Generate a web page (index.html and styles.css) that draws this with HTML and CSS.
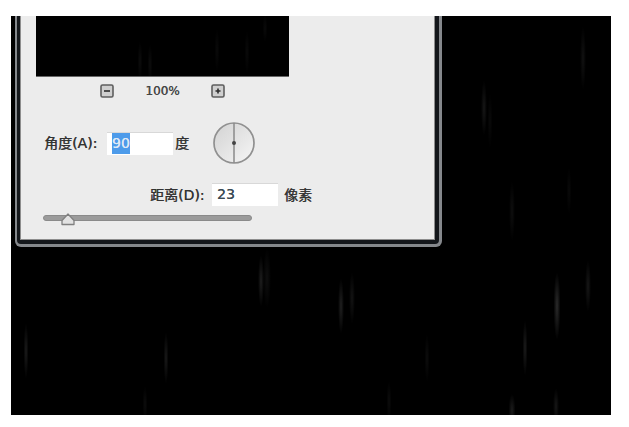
FILE: index.html
```html
<!DOCTYPE html>
<html lang="zh">
<head>
<meta charset="utf-8">
<title>动感模糊</title>
<link rel="stylesheet" href="styles.css">
</head>
<body>
<main class="canvas">
  <section class="dialog">
    <div class="dialog-dark">
      <div class="panel">
        <div class="preview"></div>
        <div class="zoom-row">
          <button class="zoom-btn" aria-label="缩小">
            <svg viewBox="0 0 14 14" width="14" height="14"><rect x="1" y="1" width="12" height="12" rx="1.5" fill="#cfcfcf" stroke="#5e5e5e" stroke-width="1.6"/><path d="M4 7h6" stroke="#2c2c2c" stroke-width="1.6"/></svg>
          </button>
          <span class="zoom-value">100%</span>
          <button class="zoom-btn" aria-label="放大">
            <svg viewBox="0 0 14 14" width="14" height="14"><rect x="1" y="1" width="12" height="12" rx="1.5" fill="#cfcfcf" stroke="#5e5e5e" stroke-width="1.6"/><path d="M4.500 7h5M7 4.500v5" stroke="#2c2c2c" stroke-width="1.6"/></svg>
          </button>
        </div>
        <div class="angle-row">
          <label class="label label-angle">角度(A):</label>
          <div class="field"><span class="selected">90</span></div>
          <span class="label unit-angle">度</span>
          <svg class="dial" viewBox="0 0 44 44" width="44" height="44">
            <defs><linearGradient id="dialFill" x1="0" y1="0" x2="1" y2="1"><stop offset="0" stop-color="#d2d2d2"/><stop offset="1" stop-color="#f6f6f6"/></linearGradient></defs>
            <circle cx="22" cy="22" r="20" fill="url(#dialFill)" stroke="#909090" stroke-width="1.700"/>
            <path d="M22 2v40" stroke="#8a8a8a" stroke-width="1.500"/>
            <circle cx="22" cy="22" r="2" fill="#444"/>
          </svg>
        </div>
        <div class="distance-row">
          <label class="label label-distance">距离(D):</label>
          <div class="field"><span class="plain">23</span></div>
          <span class="label unit-distance">像素</span>
        </div>
        <div class="slider">
          <svg class="thumb" viewBox="0 0 16 13" width="16" height="13"><path d="M8 1l6 6.500v4H2v-4z" fill="#e2e2e2" stroke="#808080" stroke-width="1.300" stroke-linejoin="round"/></svg>
        </div>
      </div>
    </div>
  </section>
</main>
</body>
</html>
```

FILE: styles.css
```css
* {
  box-sizing: border-box;
}

html,
body {
  margin: 0;
  padding: 0;
  background: #fff;
}

body {
  width: 629px;
  height: 427px;
  overflow: hidden;
  padding: 16px 0 0 11px;
}

.canvas {
  width: 600px;
  height: 399px;
  padding-left: 4px;
  overflow: hidden;
  background-color: #000;
  background-repeat: no-repeat;
  background-image:
    radial-gradient(ellipse 3px 26px at 250px 265px, rgba(255,255,255,.12), transparent),
    radial-gradient(ellipse 4px 30px at 256px 262px, rgba(255,255,255,.06), transparent),
    radial-gradient(ellipse 3px 28px at 330px 290px, rgba(255,255,255,.13), transparent),
    radial-gradient(ellipse 3px 26px at 341px 282px, rgba(255,255,255,.08), transparent),
    radial-gradient(ellipse 3.500px 34px at 546px 290px, rgba(255,255,255,.17), transparent),
    radial-gradient(ellipse 3px 26px at 577px 270px, rgba(255,255,255,.09), transparent),
    radial-gradient(ellipse 2.500px 28px at 514px 332px, rgba(255,255,255,.11), transparent),
    radial-gradient(ellipse 2.500px 28px at 15px 335px, rgba(255,255,255,.11), transparent),
    radial-gradient(ellipse 2.500px 26px at 155px 342px, rgba(255,255,255,.1), transparent),
    radial-gradient(ellipse 2.500px 24px at 416px 342px, rgba(255,255,255,.05), transparent),
    radial-gradient(ellipse 3px 18px at 545px 390px, rgba(255,255,255,.09), transparent),
    radial-gradient(ellipse 3.500px 16px at 501px 394px, rgba(255,255,255,.11), transparent),
    radial-gradient(ellipse 2.500px 20px at 378px 385px, rgba(255,255,255,.05), transparent),
    radial-gradient(ellipse 2.500px 18px at 134px 388px, rgba(255,255,255,.05), transparent),
    radial-gradient(ellipse 3px 28px at 473px 92px, rgba(255,255,255,.09), transparent),
    radial-gradient(ellipse 3px 32px at 572px 42px, rgba(255,255,255,.07), transparent),
    radial-gradient(ellipse 3px 30px at 501px 195px, rgba(255,255,255,.06), transparent),
    radial-gradient(ellipse 2.500px 28px at 479px 105px, rgba(255,255,255,.04), transparent),
    radial-gradient(ellipse 2.500px 24px at 558px 175px, rgba(255,255,255,.04), transparent);
}

.dialog {
  width: 427px;
  height: 231px;
  padding: 0 3px 3px 2px;
  background: #85888c;
  border-radius: 0 0 6px 6px;
}

.dialog-dark {
  height: 100%;
  padding: 0 4px 4px 3px;
  background: #14171b;
  border-radius: 0 0 4px 4px;
}

.panel {
  height: 100%;
  padding-left: 15px;
  border: 1px solid #8d8d8d;
  border-top: 0;
  background: #ececec;
}

.preview {
  width: 253px;
  height: 61px;
  border-bottom: 1px solid #666;
  background-color: #000;
  background-repeat: no-repeat;
  background-image:
    radial-gradient(ellipse 2.500px 20px at 104px 45px, rgba(255,255,255,.05), transparent),
    radial-gradient(ellipse 2.500px 20px at 114px 48px, rgba(255,255,255,.05), transparent),
    radial-gradient(ellipse 2.500px 22px at 181px 34px, rgba(255,255,255,.04), transparent),
    radial-gradient(ellipse 2.500px 22px at 211px 36px, rgba(255,255,255,.04), transparent),
    radial-gradient(ellipse 2.500px 14px at 229px 12px, rgba(255,255,255,.04), transparent);
}

.zoom-row {
  width: 253px;
  height: 14px;
  margin-top: 7px;
  display: flex;
  align-items: center;
  justify-content: center;
  gap: 31px;
}

.zoom-btn {
  width: 14px;
  height: 14px;
  padding: 0;
  border: 0;
  background: none;
  display: block;
}

.zoom-btn svg {
  display: block;
}

.zoom-value {
  font: 12px/14px "DejaVu Sans", sans-serif;
  color: #444;
  text-shadow: .3px 0 .5px #555;
}

.label {
  font: 14px/20px "DejaVu Sans", "Noto Sans CJK SC", sans-serif;
  color: #333;
  white-space: nowrap;
  text-shadow: .4px 0 .6px #444;
}

.angle-row {
  height: 42px;
  margin: 24px 0 0 8px;
  display: flex;
  align-items: center;
}

.label-angle {
  width: 63px;
}

.unit-angle {
  width: 37px;
  margin-left: 2px;
}

.dial {
  display: block;
}

.field {
  width: 66px;
  height: 23px;
  padding-left: 5px;
  background: #fff;
  border-top: 1px solid #d8d8d8;
  font: 14px/21px "DejaVu Sans", sans-serif;
  color: #3a4a55;
}

.selected {
  display: inline-block;
  height: 21px;
  background: #4d9bea;
  color: #dfe9f6;
  text-shadow: 0 0 .6px #dfe9f6;
}

.plain {
  display: inline-block;
  text-shadow: .3px 0 .5px #3a4a55;
}

.distance-row {
  height: 23px;
  margin: 19px 0 0 114px;
  display: flex;
  align-items: center;
}

.label-distance {
  width: 62px;
}

.unit-distance {
  margin-left: 6px;
}

.slider {
  position: relative;
  width: 209px;
  height: 6px;
  margin: 9px 0 0 7px;
  background: #9b9b9b;
  border: 1px solid #8a8a8a;
  border-radius: 3px;
}

.thumb {
  position: absolute;
  left: 16px;
  top: -3px;
  display: block;
}
```
